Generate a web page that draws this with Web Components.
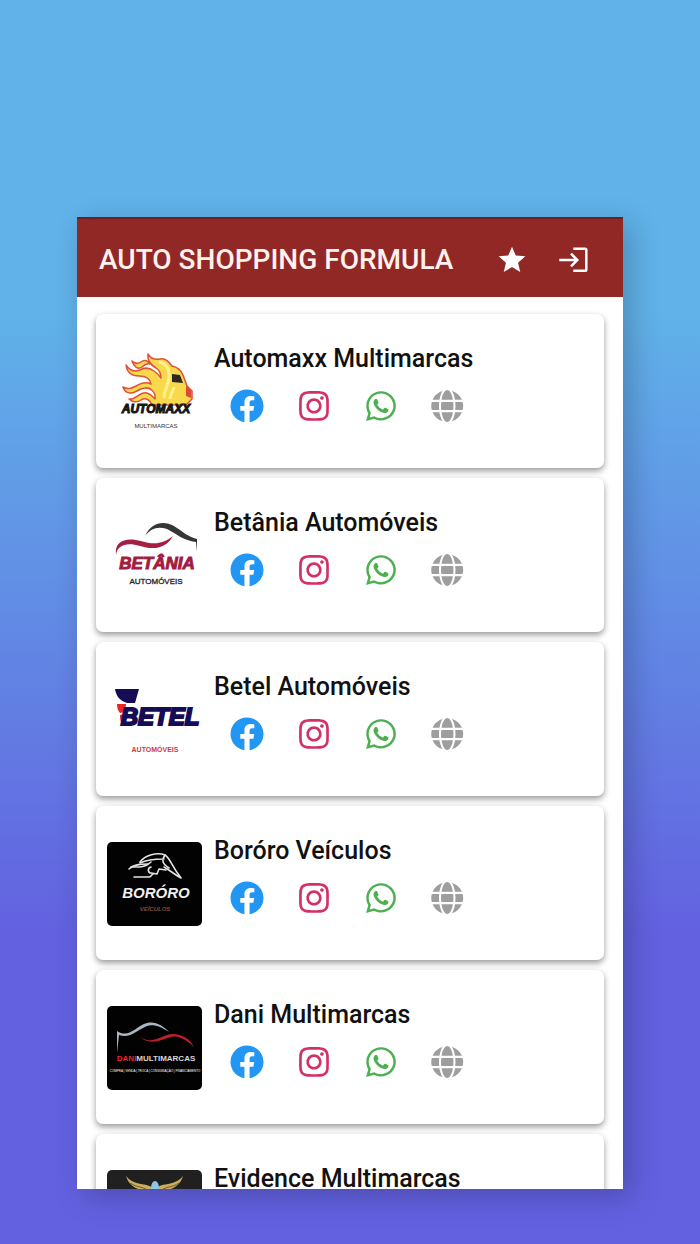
<!DOCTYPE html>
<html lang="pt-BR">
<head>
<meta charset="UTF-8">
<meta name="viewport" content="width=device-width, initial-scale=1">
<title>Auto Shopping Formula</title>
<style>
    * { box-sizing: border-box; }

    body {
        margin: 0;
        height: 100vh;
        padding: 217px 11% 55px;
        font-family: Roboto, "Liberation Sans", sans-serif;
        color: #111;
        background: linear-gradient(180deg, #60b2e9 25%, #6361e0 75%);
    }

    .logo {
        display: block;
        width: 95px;
        height: 84px;
        border-radius: 5px;
        font-family: "Liberation Sans", sans-serif;
        font-weight: bold;
        text-anchor: middle;
    }
</style>
</head>
<body>

<app-screen>
    <app-header slot="header">AUTO SHOPPING FORMULA</app-header>

    <dealer-card name="Automaxx Multimarcas">
        <svg slot="logo" class="logo" viewBox="0 0 95 84">
            <g fill="#f8d94c" stroke="#e0503a" stroke-width="1.5" stroke-linejoin="round">
                <path d="M25 11c3 3 6 3 9 1 4-3 7-1 9 2-4-1-6 1-8 3-4 3-8 0-10-6z"/>
                <path d="M41 4c3 5 7 6 12 5 6-1 9 3 12 7 5 1 9 4 11 9l4 11 5 5v8l-6 6H45c-2-5-6-8-11-5-4 3-9 2-12-1 8 1 10-8 18-6 4 1 6 4 8 6 1-6-4-12-10-11-6 0-10 6-15 5-4 0-6-3-7-6 5 3 9 1 13-1 5-3 10-5 15-2-1-6-6-8-12-8-7 0-12-3-13-11 4 6 9 7 14 5 5-3 10-2 14 1 3 2 5 4 7 7 0-4-2-8-5-10-5-3-9-8-8-14z"/>
            </g>
            <path d="M52 12c7 1 11 7 10 16-1 8-5 12-5 20M67 37c-1 5-4 8-4 12" fill="none" stroke="#fff28d" stroke-width="3"/>
            <path d="M65 24l8 1 3 8-11-1z" fill="#2d2724"/>
            <path d="M79 36l5 4v8l-5-2z" fill="#df4933"/>
            <text x="49" y="63" font-size="12" font-style="italic" fill="#151515" stroke="#151515">AUTOMAXX</text>
            <text x="49" y="78" font-size="6" font-weight="normal" fill="#333">MULTIMARCAS</text>
        </svg>
    </dealer-card>

    <dealer-card name="Betânia Automóveis">
        <svg slot="logo" class="logo" viewBox="0 0 95 84">
            <path d="M38 22C44 9 56 6 67 12c8 5 14 11 23 13v13l-1-10C77 27 68 19 60 15c-9-3-16-1-22 7z" fill="#363636"/>
            <path d="M9 41c-2-15 11-18 25-14 13 4 22 3 32-5-7 13-20 14-33 10C20 28 10 31 9 41z" fill="#a51e43"/>
            <text x="50" y="55" font-size="17" font-style="italic" fill="#a31b40" stroke="#a31b40">BETÂNIA</text>
            <text x="49" y="70" font-size="8" font-weight="normal" fill="#222" stroke="#222" stroke-width=".3">AUTOMÓVEIS</text>
        </svg>
    </dealer-card>

    <dealer-card name="Betel Automóveis">
        <svg slot="logo" class="logo" viewBox="0 0 95 84">
            <path d="M8 11h24l-4 14h-8c-7-2-11-7-12-14z" fill="#160b55"/>
            <path d="M10 26h9l-1 8-5 1c-2-2-3-5-3-9z" fill="#e72828"/>
            <path d="M13 37l5-1-1 12c-3-2-4-6-4-11z" fill="#d7222b"/>
            <text x="53" y="47" font-size="24" font-style="italic" fill="#160b55" stroke="#160b55" stroke-width="2">BETEL</text>
            <text x="48" y="74" font-size="7" fill="#d13b40">AUTOMÓVEIS</text>
        </svg>
    </dealer-card>

    <dealer-card name="Boróro Veículos">
        <svg slot="logo" class="logo" viewBox="0 0 95 84">
            <rect width="95" height="84" fill="#020202"/>
            <g fill="none" stroke="#e3e3e3" stroke-width="1.6" stroke-linecap="round" stroke-linejoin="round">
                <path d="M22 27c4-4 9-5 19-5M33 20c5-7 17-10 25-7 5 3 6 10 16 23-6-3-10-7-17-11"/>
                <path d="M33 21c8-4 17-4 24-4M58 13c-4 6-2 9 4 13M24 25c7 0 14 1 20-5M44 25c-4 1-3 6 0 6l6 1 2-5 7 1"/>
                <path d="M27 35h15c2 0 2-2 4-3"/>
            </g>
            <text x="49" y="56" font-size="15" font-style="italic" fill="#f0f0f0">BORÓRO</text>
            <text x="48" y="69" font-size="6" font-style="italic" fill="#86492f">VEÍCULOS</text>
        </svg>
    </dealer-card>

    <dealer-card name="Dani Multimarcas">
        <svg slot="logo" class="logo" viewBox="0 0 95 84">
            <rect width="95" height="84" fill="#020202"/>
            <path d="M10 47V25c12 8 19-5 30-8 9-2 16 3 22 9-8-5-15-8-22-6-10 4-17 13-28 9z" fill="#a9b7c0"/>
            <path d="M33 31c14 9 21-3 33-3 9 0 17 5 21 13-8-7-15-12-23-10-11 3-20 9-31 0z" fill="#bc2025"/>
            <text x="49" y="55" font-size="8" fill="#d7d7d7"><tspan fill="#ed2026">DANI</tspan>MULTIMARCAS</text>
            <text x="48" y="66" font-size="3" font-weight="normal" fill="#fff">COMPRA | VENDA | TROCA | CONSIGNAÇÃO | FINANCIAMENTO</text>
        </svg>
    </dealer-card>

    <dealer-card name="Evidence Multimarcas">
        <svg slot="logo" class="logo" viewBox="0 0 95 84">
            <rect width="95" height="84" fill="#202020"/>
            <path d="M19 6c7 9 18 7 26 11l-2 6c-10-4-20-4-24-17zM76 6c-7 9-18 7-26 11l2 6c10-4 20-4 24-17z" fill="#c9ae5c"/>
            <path d="M23 13c7 5 14 3 20 9M72 13c-7 5-14 3-20 9" fill="none" stroke="#6d5b2e"/>
            <ellipse cx="48" cy="18" rx="4" ry="7" fill="#91c5e8"/>
        </svg>
    </dealer-card>
</app-screen>

<script>
class AppScreen extends HTMLElement {
    constructor() {
        super();
        this.attachShadow({ mode: 'open' });
        this.shadowRoot.innerHTML = `
            <style>
                :host {
                    display: flex;
                    flex-direction: column;
                    height: 100%;
                    background: #fff;
                    box-shadow: 8px 8px 28px rgba(0,0,0,0.22);
                }

                main {
                    flex: 1;
                    min-height: 0;
                    display: flex;
                    flex-direction: column;
                    gap: 10px;
                    padding: 17px 19px;
                    overflow-y: auto;
                    scrollbar-width: none;
                }
            </style>
            <slot name="header"></slot>
            <main><slot></slot></main>
        `;
    }
}

class AppHeader extends HTMLElement {
    constructor() {
        super();
        this.attachShadow({ mode: 'open' });
        this.shadowRoot.innerHTML = `
            <style>
                :host { display: block; }

                header {
                    box-sizing: border-box;
                    display: flex;
                    align-items: center;
                    gap: 30px;
                    height: 80px;
                    padding: 5px 33px 0 22px;
                    background: #922825;
                    box-shadow: inset 0 2px #6e1f22;
                    color: #fff1ee;
                }

                h1 {
                    flex: 1;
                    margin: 0;
                    font-size: 28px;
                    font-weight: 500;
                    line-height: 36px;
                    white-space: nowrap;
                }

                button {
                    padding: 0;
                    border: none;
                    background: none;
                    color: #fff;
                    cursor: pointer;
                }

                svg {
                    display: block;
                    width: 32px;
                    height: 32px;
                }
            </style>
            <header>
                <h1><slot></slot></h1>
                <button aria-label="Favoritos">
                    <svg viewBox="0 0 24 24" fill="currentColor"><path d="M12 17.27 18.18 21l-1.64-7.03L22 9.24l-7.19-.61L12 2 9.19 8.63 2 9.24l5.46 4.73L5.82 21z"/></svg>
                </button>
                <button aria-label="Entrar">
                    <svg viewBox="0 0 32 32" fill="none" stroke="currentColor" stroke-width="2.5"><path d="M15.3 4.8H27q1.3 0 1.3 1.3v19.3q0 1.3-1.3 1.3H15.3M1.3 16H20M13 9.7l6.3 6.3-6.3 6.3"/></svg>
                </button>
            </header>
        `;
    }
}

const links = [
    {
        label: 'Facebook', color: '#2196f3', viewBox: '0 0 512 512',
        path: 'M504 256C504 119 393 8 256 8S8 119 8 256c0 123.78 90.69 226.38 209.25 245V327.69h-63V256h63v-54.64c0-62.15 37-96.48 93.67-96.48 27.14 0 55.52 4.84 55.52 4.84v61h-31.28c-30.8 0-40.41 19.12-40.41 38.73V256h68.78l-11 71.69h-57.78V501C413.31 479.38 504 379.78 504 256z'
    },
    {
        label: 'Instagram', color: '#d32f68', viewBox: '-32 0 512 512',
        path: 'M224.1 141c-63.6 0-114.9 51.3-114.9 114.9s51.3 114.9 114.9 114.9S339 319.5 339 255.9 287.7 141 224.1 141zm0 189.6c-41.1 0-74.7-33.5-74.7-74.7s33.5-74.7 74.7-74.7 74.7 33.5 74.7 74.7-33.6 74.7-74.7 74.7zm146.4-194.3c0 14.9-12 26.8-26.8 26.8-14.9 0-26.8-12-26.8-26.8s12-26.8 26.8-26.8 26.8 12 26.8 26.8zm76.1 27.2c-1.7-35.9-9.9-67.7-36.2-93.9-26.2-26.2-58-34.4-93.9-36.2-37-2.1-147.9-2.1-184.9 0-35.8 1.7-67.6 9.9-93.9 36.1s-34.4 58-36.2 93.9c-2.1 37-2.1 147.9 0 184.9 1.7 35.9 9.9 67.7 36.2 93.9s58 34.4 93.9 36.2c37 2.1 147.9 2.1 184.9 0 35.9-1.7 67.7-9.9 93.9-36.2 26.2-26.2 34.4-58 36.2-93.9 2.1-37 2.1-147.8 0-184.8zM398.8 388c-7.8 19.6-22.9 34.7-42.6 42.6-29.5 11.7-99.5 9-132.1 9s-102.7 2.6-132.1-9c-19.6-7.8-34.7-22.9-42.6-42.6-11.7-29.5-9-99.5-9-132.1s-2.6-102.7 9-132.1c7.8-19.6 22.9-34.7 42.6-42.6 29.5-11.7 99.5-9 132.1-9s102.7-2.6 132.1 9c19.6 7.8 34.7 22.9 42.6 42.6 11.7 29.5 9 99.5 9 132.1s2.7 102.7-9 132.1z'
    },
    {
        label: 'WhatsApp', color: '#4caf50', viewBox: '-32 0 512 512',
        path: 'M380.9 97.1C339 55.1 283.2 32 223.9 32c-122.4 0-222 99.6-222 222 0 39.1 10.2 77.3 29.6 111L0 480l117.7-30.9c32.4 17.7 68.9 27 106.1 27h.1c122.3 0 224.1-99.6 224.1-222 0-59.3-25.2-115-67.1-157zm-157 341.6c-33.2 0-65.7-8.9-94-25.7l-6.7-4-69.8 18.3L72 359.2l-4.4-7c-18.5-29.4-28.2-63.3-28.2-98.2 0-101.7 82.8-184.5 184.6-184.5 49.3 0 95.6 19.2 130.4 54.1 34.8 34.9 56.2 81.2 56.1 130.5 0 101.8-84.9 184.6-186.6 184.6zm101.2-138.2c-5.5-2.8-32.8-16.2-37.9-18-5.1-1.9-8.8-2.8-12.5 2.8-3.7 5.6-14.3 18-17.6 21.8-3.2 3.7-6.5 4.2-12 1.4-32.6-16.3-54-29.1-75.5-66-5.7-9.8 5.7-9.1 16.3-30.3 1.8-3.7.9-6.9-.5-9.7-1.4-2.8-12.5-30.1-17.1-41.2-4.5-10.8-9.1-9.3-12.5-9.3-3.2-.2-6.9-.2-10.6-.2-3.7 0-9.7 1.4-14.8 6.9-5.1 5.6-19.4 19-19.4 46.3 0 27.3 19.9 53.7 22.6 57.4 2.8 3.7 39.1 59.7 94.8 83.8 35.2 15.2 49 16.5 66.6 13.9 10.7-1.6 32.8-13.4 37.4-26.4 4.6-13 4.6-24.1 3.2-26.4-1.3-2.5-5-3.9-10.5-6.6z'
    },
    {
        label: 'Site', color: '#9e9e9e', viewBox: '-4 -8 528 528',
        path: 'M336.5 160C322 70.7 287.8 8 248 8s-74 62.7-88.5 152h177zM152 256c0 22.2 1.2 43.5 3.3 64h185.3c2.1-20.5 3.3-41.8 3.3-64s-1.2-43.5-3.3-64H155.3c-2.1 20.5-3.3 41.8-3.3 64zm324.7-96c-28.6-67.9-86.5-120.4-158-141.6 24.4 33.8 41.2 84.7 50 141.6h108zM177.2 18.4C105.8 39.6 47.8 92.1 19.3 160h108c8.7-56.9 25.5-107.8 49.9-141.6zM487.4 192H372.7c2.1 21 3.3 42.5 3.3 64s-1.2 43-3.3 64h114.6c5.5-20.5 8.6-41.8 8.6-64s-3.1-43.5-8.5-64zM120 256c0-21.5 1.2-43 3.3-64H8.6C3.2 212.5 0 233.8 0 256s3.2 43.5 8.6 64h114.6c-2-21-3.2-42.5-3.2-64zm39.5 96c14.5 89.3 48.7 152 88.5 152s74-62.7 88.5-152h-177zm159.3 141.6c71.4-21.2 129.4-73.7 158-141.6h-108c-8.8 56.9-25.6 107.8-50 141.6zM19.3 352c28.6 67.9 86.5 120.4 158 141.6-24.4-33.8-41.2-84.7-50-141.6h-108z'
    }
];

class SocialLinks extends HTMLElement {
    constructor() {
        super();
        this.attachShadow({ mode: 'open' });
        this.shadowRoot.innerHTML = `
            <style>
                :host {
                    display: flex;
                    gap: 33px;
                    padding-left: 16px;
                }

                svg {
                    display: block;
                    width: 34px;
                    height: 34px;
                }
            </style>
            ${links.map(link => `
                <a href="#" aria-label="${link.label}" style="color: ${link.color}">
                    <svg viewBox="${link.viewBox}" fill="currentColor"><path d="${link.path}"/></svg>
                </a>
            `).join('')}
        `;
    }
}

class DealerCard extends HTMLElement {
    constructor() {
        super();
        this.attachShadow({ mode: 'open' });
        this.shadowRoot.innerHTML = `
            <style>
                :host {
                    flex: none;
                    box-sizing: border-box;
                    display: flex;
                    align-items: flex-start;
                    gap: 12px;
                    min-height: 154px;
                    padding: 30px 11px;
                    border-radius: 7px;
                    background: #fff;
                    box-shadow: 0 3px 6px rgba(0,0,0,0.4);
                }

                .logo-box { padding-top: 6px; }

                h2 {
                    margin: 0 0 15px;
                    font-size: 25px;
                    font-weight: 500;
                    line-height: 30px;
                }
            </style>
            <div class="logo-box"><slot name="logo"></slot></div>
            <div>
                <h2></h2>
                <social-links></social-links>
            </div>
        `;
        this.shadowRoot.querySelector('h2').textContent = this.getAttribute('name');
    }
}

customElements.define('app-screen', AppScreen);
customElements.define('app-header', AppHeader);
customElements.define('social-links', SocialLinks);
customElements.define('dealer-card', DealerCard);
</script>
</body>
</html>
